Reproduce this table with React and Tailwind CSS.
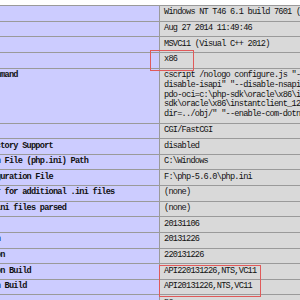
const rows = [
  { k: "System", v: ["Windows NT T46 6.1 build 7601 (Windows 7 Business Edition Service Pack 1) i586"] },
  { k: "Build Date", v: ["Aug 27 2014 11:49:46"] },
  { k: "Compiler", v: ["MSVC11 (Visual C++ 2012)"] },
  { k: "Architecture", v: ["x86"] },
  {
    k: "Configure Command",
    v: [
      'cscript /nologo configure.js "--enable-snapshot-build"',
      'disable-isapi" "--disable-nsapi" "--enable-debug-pack"',
      "pdo-oci=c:\\php-sdk\\oracle\\x86\\instantclient_12_1\\sdk,shared",
      "sdk\\oracle\\x86\\instantclient_12_1\\sdk,shared\" \"--with-oci8-12c",
      'dir=../obj/" "--enable-com-dotnet=shared" "--with-mcrypt=static"',
    ],
  },
  { k: "Server API", v: ["CGI/FastCGI"] },
  { k: "Virtual Directory Support", v: ["disabled"] },
  { k: "Configuration File (php.ini) Path", v: ["C:\\Windows"] },
  { k: "Loaded Configuration File", v: ["F:\\php-5.6.0\\php.ini"] },
  { k: "Scan this dir for additional .ini files", v: ["(none)"] },
  { k: "Additional .ini files parsed", v: ["(none)"] },
  { k: "PHP API", v: ["20131106"] },
  { k: "PHP Extension", v: ["20131226"] },
  { k: "Zend Extension", v: ["220131226"] },
  { k: "Zend Extension Build", v: ["API220131226,NTS,VC11"] },
  { k: "PHP Extension Build", v: ["API20131226,NTS,VC11"] },
  { k: "Debug Build", v: ["no"] },
];

export default function App() {
  return (
    <div className="relative w-[300px] h-[300px] overflow-hidden bg-white pt-[5px] font-['Liberation_Mono',monospace] text-[8.6px] tracking-[-0.76px] text-[#111]">
      <div className="ml-[-62px] w-[620px] grid grid-cols-[220px_1fr] gap-px p-px bg-[#9a9a9a]">
        {rows.map((r) => (
          <div key={r.k} className="contents">
            <div className="bg-[#ccccff] pl-[4px] py-[2.4px] leading-[9.85px] font-bold whitespace-pre overflow-hidden">
              {r.k}
            </div>
            <div className="bg-[#d9d9d9] pl-[4px] py-[2.4px] leading-[9.85px] whitespace-pre overflow-hidden">
              {r.v.map((line, i) => (
                <div key={i}>{line}</div>
              ))}
            </div>
          </div>
        ))}
      </div>

      {/* red highlight boxes */}
      <div className="absolute left-[150px] top-[50px] w-[44px] h-[21px] border border-[#e05a5a]" />
      <div className="absolute left-[159px] top-[265px] w-[102px] h-[32px] border border-[#e05a5a]" />
    </div>
  );
}
